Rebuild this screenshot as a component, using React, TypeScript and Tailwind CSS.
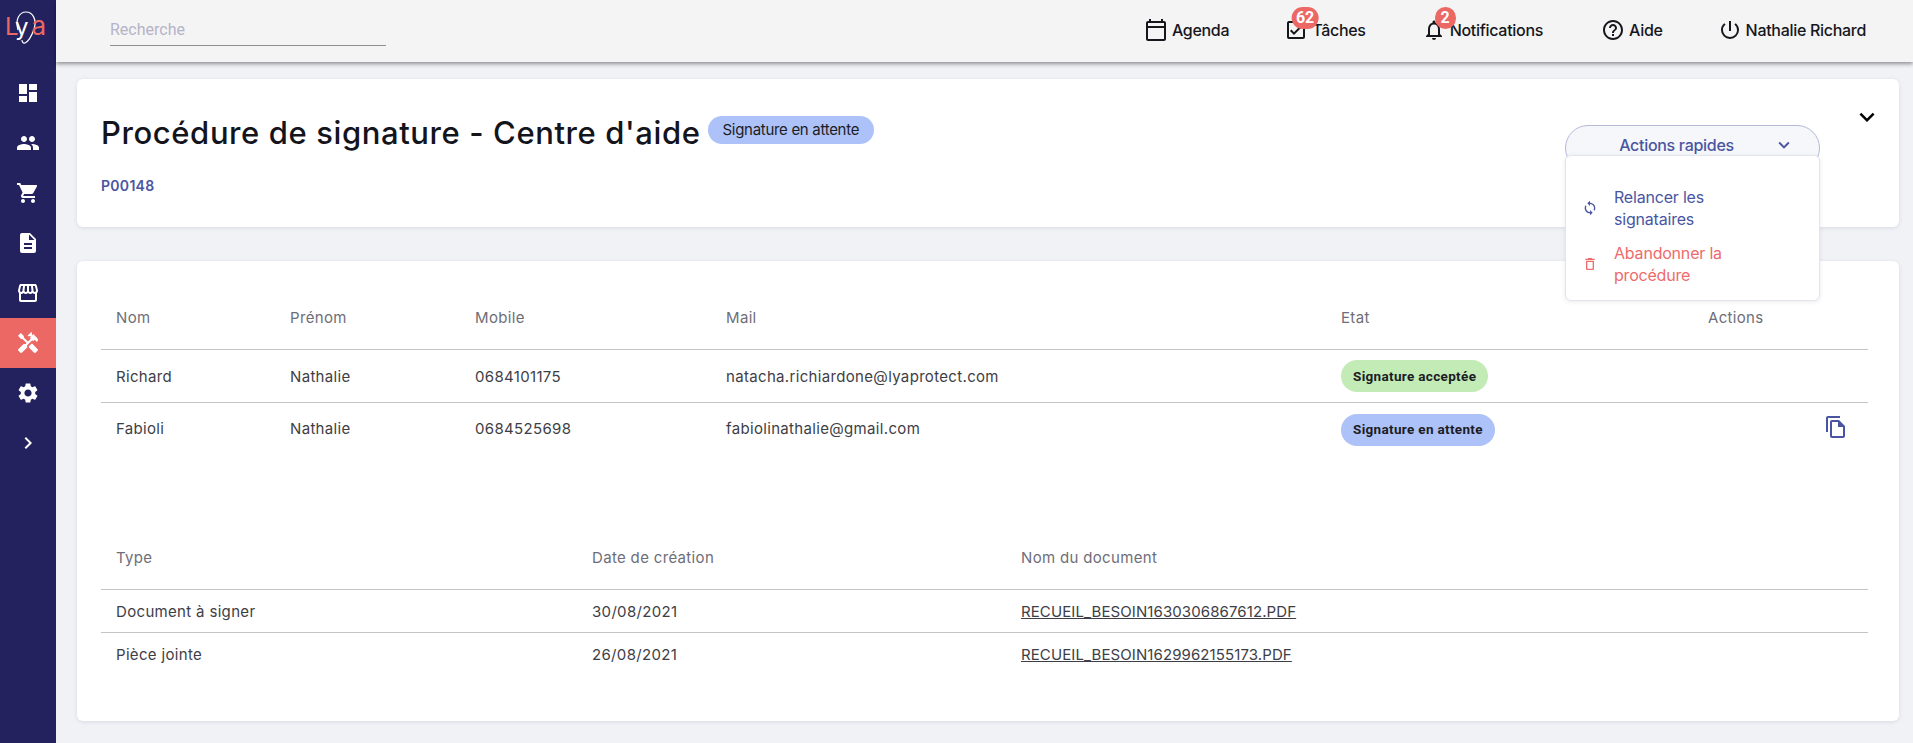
import React from "react";
import { MdDashboard, MdPeople, MdShoppingCart, MdDescription, MdOutlineStorefront, MdHandyman, MdSettings, MdChevronRight, MdOutlineAssignmentTurnedIn, MdOutlineNotifications, MdHelpOutline, MdPowerSettingsNew, MdSync, MdOutlineDelete, MdOutlineFileCopy, MdExpandMore, MdOutlineCalendarToday } from "react-icons/md";

const inter = "font-['Inter','Liberation_Sans',sans-serif]";

function Logo() {
  return (
    <svg viewBox="0 0 56 56" className="h-[56px] w-[56px]" fill="none">
      <path d="M18 30 C15 20 19 12 26 12 C33 12 37 20 34 29 C32 35 29 41 25 43 C23 43.5 22 42 22 40" stroke="#fff" strokeWidth="1.2" />
      <text x="5" y="35" fontFamily="Inter, sans-serif" fontSize="24">
        <tspan fill="#eb6864">L</tspan>
        <tspan fill="#fff" dx="-2">y</tspan>
        <tspan fill="#eb6864" dx="3" fontSize="26">a</tspan>
      </text>
    </svg>
  );
}

function Side({ icon: Icon, active, size = 24 }: { icon: any; active?: boolean; size?: number }) {
  return (
    <div className={`flex h-[50px] w-full items-center justify-center text-white ${active ? "bg-[#eb6864]" : ""}`}>
      <Icon size={size} />
    </div>
  );
}

function TopItem({ icon: Icon, label, badge, className }: { icon: any; label: string; badge?: string; className?: string }) {
  return (
    <div className={`relative flex items-center gap-[4px] text-[#16161d] ${className ?? ""}`}>
      <Icon size={24} />
      <span className={`${inter} text-[16px] font-medium tracking-[-0.3px]`}>{label}</span>
      {badge && (
        <span className="absolute left-[34px] top-[-11px] flex h-[22px] min-w-[21px] -translate-x-full items-center justify-center rounded-full bg-[#eb6864] px-[4px] text-[16px] font-bold text-white font-['Roboto',sans-serif]">
          {badge}
        </span>
      )}
    </div>
  );
}

const Pill = ({ children, color }: { children: React.ReactNode; color: string }) => (
  <span className={`inline-flex h-[32px] items-center rounded-full px-[12px] text-[13.5px] font-bold text-[#1c1c24] font-['Roboto',sans-serif] ${color}`}>{children}</span>
);

const usersCols = "grid grid-cols-[174px_185px_251px_615px_367px_167px]";
const docsCols = "grid grid-cols-[476px_429px_849px]";

export default function App() {
  return (
    <div className={`flex h-[743px] w-[1913px] overflow-hidden bg-[#f0f2f6] ${inter}`}>
      <aside className="flex w-[56px] shrink-0 flex-col items-center bg-[#24215f]">
        <div className="h-[62px] w-full"><Logo /></div>
        <div className="flex w-full flex-col pt-[6px]">
          <Side icon={MdDashboard} />
          <Side icon={MdPeople} />
          <Side icon={MdShoppingCart} />
          <Side icon={MdDescription} />
          <Side icon={MdOutlineStorefront} />
          <Side icon={MdHandyman} active />
          <Side icon={MdSettings} />
          <Side icon={MdChevronRight} />
        </div>
      </aside>

      <div className="flex min-w-0 flex-1 flex-col">
        <header className="relative z-10 flex h-[62px] shrink-0 items-center justify-between bg-[#f4f4f4] pl-[54px] pr-[47px] shadow-[0_2px_4px_rgba(0,0,0,0.4)]">
          <div className="h-[30px] w-[276px] border-b border-[#8f8f8f] pt-[3px] text-[16px] leading-[22px] text-[#b6b3c8] font-['Roboto',sans-serif]">Recherche</div>
          <div className="flex items-center pb-[2px]">
            <TopItem icon={MdOutlineCalendarToday} label="Agenda" className="mr-[55px]" />
            <TopItem icon={MdOutlineAssignmentTurnedIn} label="Tâches" badge="62" className="mr-[56px]" />
            <TopItem icon={MdOutlineNotifications} label="Notifications" badge="2" className="mr-[58px]" />
            <TopItem icon={MdHelpOutline} label="Aide" className="mr-[55px]" />
            <TopItem icon={MdPowerSettingsNew} label="Nathalie Richard" />
          </div>
        </header>

        <main className="flex flex-col gap-[34px] pl-[21px] pr-[14px] pt-[17px]">
          <section className="relative h-[148px] rounded-[6px] bg-white px-[24px] pt-[35px] shadow-[0_1px_4px_rgba(60,60,90,0.12)]">
            <div className="flex items-center gap-[7px]">
              <h1 className="text-[31px] font-medium leading-[38px] tracking-[0.6px] text-[#14141c]">Procédure de signature - Centre d'aide</h1>
              <span className="-mt-[6px] inline-flex h-[28px] items-center rounded-full bg-[#adc2f8] px-[15px] text-[15px] tracking-[-0.3px] text-[#1c1c24]">Signature en attente</span>
            </div>
            <div className="mt-[23px] text-[14px] font-semibold tracking-[0.3px] text-[#4a55a2]">P00148</div>

            <MdExpandMore size={30} className="absolute right-[17px] top-[23px] text-black" />
            <div className="absolute left-[1488px] top-[46px] flex h-[46px] w-[255px] items-start justify-center rounded-[24px] border border-[#b4b9d8] bg-[#f6f7fa] pt-[7px] text-[16px] font-medium tracking-[-0.3px] text-[#4a55a2]">
              <span className="ml-[29px]">Actions rapides</span>
              <MdExpandMore size={22} className="ml-[39px] mt-[1px]" />
            </div>
            <div className="absolute left-[1488px] top-[76px] z-20 flex h-[146px] w-[255px] flex-col rounded-[6px] border border-[#e3e5ee] bg-white pl-[16px] pt-[30px] text-[16px] leading-[22px] tracking-[-0.2px] shadow-[0_1px_4px_rgba(60,60,90,0.1)]">
              <div className="flex items-center gap-[16px] text-[#4a55a2]">
                <MdSync size={16} />
                <span className="w-[120px]">Relancer les signataires</span>
              </div>
              <div className="mt-[12px] flex items-center gap-[16px] text-[#ee6b6b]">
                <MdOutlineDelete size={16} />
                <span className="w-[120px]">Abandonner la procédure</span>
              </div>
            </div>
          </section>

          <section className="h-[460px] rounded-[6px] bg-white pl-[24px] pr-[31px] pt-[33px] text-[15px] tracking-[0.33px] text-[#3e3e46] shadow-[0_1px_4px_rgba(60,60,90,0.12)]">
            <div className={`${usersCols} h-[56px] border-b border-[#c4c4c4] pl-[15px] pt-[13px] text-[#6e6e78]`}>
              <span>Nom</span><span>Prénom</span><span>Mobile</span><span>Mail</span><span>Etat</span><span>Actions</span>
            </div>
            <div className={`${usersCols} h-[53px] items-center border-b border-[#c4c4c4] pl-[15px]`}>
              <span className="pt-[2px]">Richard</span><span className="pt-[2px]">Nathalie</span><span className="pt-[2px]">0684101175</span><span className="pt-[2px]">natacha.richiardone@lyaprotect.com</span>
              <span><Pill color="bg-[#c2ebb6]">Signature acceptée</Pill></span><span />
            </div>
            <div className={`${usersCols} h-[53px] items-center pl-[15px]`}>
              <span>Fabioli</span><span>Nathalie</span><span>0684525698</span><span>fabiolinathalie@gmail.com</span>
              <span><Pill color="bg-[#adc2f8]">Signature en attente</Pill></span>
              <span className="flex justify-end pr-[27px] text-[#4a55a2]"><MdOutlineFileCopy size={24} className="-mt-[6px]" /></span>
            </div>

            <div className={`${docsCols} mt-[69px] h-[65px] border-b border-[#c4c4c4] pl-[15px] pt-[22px] text-[#6e6e78]`}>
              <span>Type</span><span>Date de création</span><span>Nom du document</span>
            </div>
            <div className={`${docsCols} h-[43px] items-center border-b border-[#c4c4c4] pl-[15px] pt-[2px]`}>
              <span>Document à signer</span><span>30/08/2021</span><span className="tracking-[0.1px] underline">RECUEIL_BESOIN1630306867612.PDF</span>
            </div>
            <div className={`${docsCols} h-[43px] items-center pl-[15px] pt-[2px]`}>
              <span>Pièce jointe</span><span>26/08/2021</span><span className="tracking-[0.1px] underline">RECUEIL_BESOIN1629962155173.PDF</span>
            </div>
          </section>
        </main>
      </div>
    </div>
  );
}
